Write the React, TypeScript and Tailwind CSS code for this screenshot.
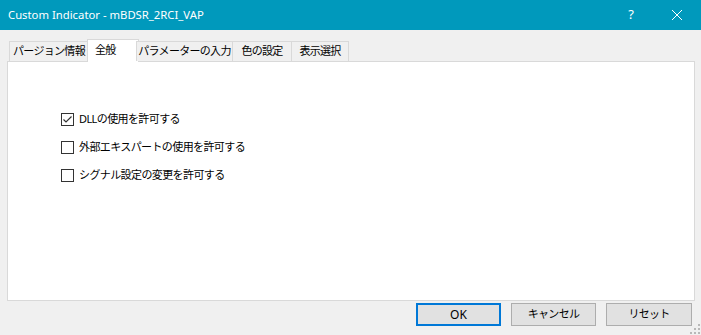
import React from "react";

const font = { fontFamily: '"Noto Sans", "Noto Sans CJK JP", sans-serif' };

function Check({ checked }: { checked: boolean }) {
  return (
    <div className="w-[13px] h-[13px] border border-[#333333] bg-white flex items-center justify-center shrink-0">
      {checked && (
        <svg width="11" height="11" viewBox="0 0 11 11">
          <path d="M1.5 5.5 L4 8 L9.5 2.5" fill="none" stroke="#333" strokeWidth="1.2" />
        </svg>
      )}
    </div>
  );
}

export default function App() {
  const tabs = [
    { label: "パージョン情報", w: 80 },
    { label: "全般", w: 52, active: true },
    { label: "パラメーターの入力", w: 97 },
    { label: "色の設定", w: 60 },
    { label: "表示選択", w: 58 },
  ];
  const items = [
    { label: "DLLの使用を許可する", checked: true },
    { label: "外部エキスパートの使用を許可する", checked: false },
    { label: "シグナル設定の変更を許可する", checked: false },
  ];
  return (
    <div className="w-[701px] h-[335px] bg-[#f0f0f0] flex flex-col relative overflow-hidden" style={font}>
      <div className="h-[30px] bg-[#0099bc] flex items-center text-white text-[11.3px] shrink-0">
        <div className="pl-[8px] flex-1">Custom Indicator - mBDSR_2RCI_VAP</div>
        <div className="w-[46px] flex justify-center text-[13px]">?</div>
        <div className="w-[46px] flex justify-center mr-[1px]">
          <svg width="10" height="10" viewBox="0 0 10 10">
            <path d="M0 0 L10 10 M10 0 L0 10" stroke="white" strokeWidth="1" />
          </svg>
        </div>
      </div>
      <div className="flex items-end pl-[9px] h-[31px] shrink-0 relative z-10">
        {tabs.map((t) =>
          t.active ? (
            <div
              key={t.label}
              className="h-[23px] bg-white border border-b-0 border-[#d9d9d9] -mb-[1px] flex items-start pl-[7px] pt-[2px] text-[11px] tracking-[-0.7px] text-black whitespace-nowrap"
              style={{ width: t.w, marginLeft: -2, marginRight: -2 }}
            >
              {t.label}
            </div>
          ) : (
            <div
              key={t.label}
              className="h-[20px] bg-[#f0f0f0] border border-b-0 border-[#d9d9d9] flex items-center justify-center text-[11px] tracking-[-0.7px] text-black -ml-[1px] first:ml-0 whitespace-nowrap"
              style={{ width: t.w }}
            >
              {t.label}
            </div>
          )
        )}
      </div>
      <div className="ml-[7px] w-[688px] h-[240px] bg-white border border-[#d9d9d9] shrink-0 flex flex-col gap-[15px] pt-[51px] pl-[53px]">
        {items.map((it) => (
          <div key={it.label} className="flex items-center gap-[5px] h-[13px] text-[11px] tracking-[-0.6px] text-black whitespace-nowrap">
            <Check checked={it.checked} />
            <span>{it.label}</span>
          </div>
        ))}
      </div>
      <div className="flex justify-end gap-[10px] pr-[9px] pt-[2px]">
        <button className="w-[85px] h-[23px] bg-[#e1e1e1] border-2 border-[#0078d7] text-[12px] text-black">OK</button>
        <button className="w-[85px] h-[23px] bg-[#e1e1e1] border border-[#adadad] text-[11px] tracking-[-0.7px] text-black">キャンセル</button>
        <button className="w-[86px] h-[23px] bg-[#e1e1e1] border border-[#adadad] text-[11px] tracking-[-0.7px] text-black">リセット</button>
      </div>
      <svg className="absolute right-[1px] bottom-[1px]" width="10" height="10" viewBox="0 0 10 10">
        <rect x="8" y="0" width="2" height="2" fill="#b8b8b8" />
        <rect x="4" y="4" width="2" height="2" fill="#b8b8b8" />
        <rect x="8" y="4" width="2" height="2" fill="#b8b8b8" />
        <rect x="0" y="8" width="2" height="2" fill="#b8b8b8" />
        <rect x="4" y="8" width="2" height="2" fill="#b8b8b8" />
        <rect x="8" y="8" width="2" height="2" fill="#b8b8b8" />
      </svg>
    </div>
  );
}
